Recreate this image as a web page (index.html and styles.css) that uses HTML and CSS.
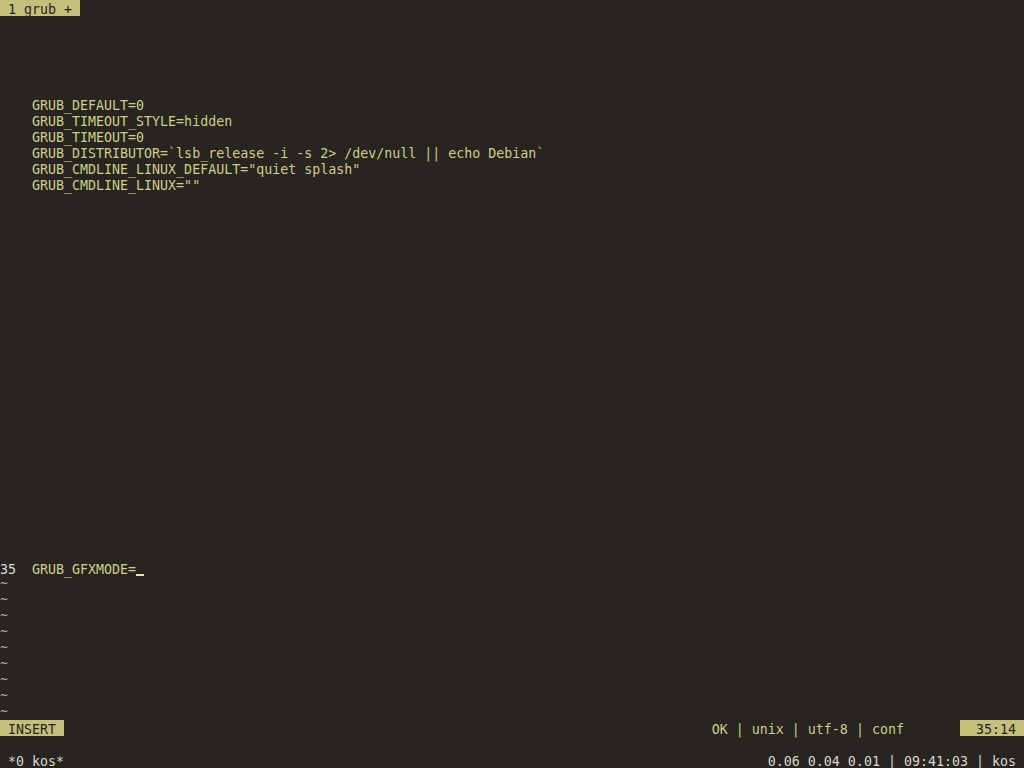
FILE: index.html
```html
<!DOCTYPE html>
<html lang="en">
<head>
    <meta charset="UTF-8">
    <link rel="stylesheet" href="styles.css">
</head>
<body>
    <div class="screen">
        <div class="row tabbar"><span class="tab"> 1 grub + </span></div>

        <div class="editor">
            <div class="blank-top"></div>
            <div class="row">    GRUB_DEFAULT=0</div>
            <div class="row">    GRUB_TIMEOUT_STYLE=hidden</div>
            <div class="row">    GRUB_TIMEOUT=0</div>
            <div class="row">    GRUB_DISTRIBUTOR=`lsb_release -i -s 2&gt; /dev/null || echo Debian`</div>
            <div class="row">    GRUB_CMDLINE_LINUX_DEFAULT="quiet splash"</div>
            <div class="row">    GRUB_CMDLINE_LINUX=""</div>
            <div class="blank-mid"></div>
            <div class="row"><span class="lnum">35  </span>GRUB_GFXMODE=<span class="cursor"> </span></div>
            <div class="row tilde">~</div>
            <div class="row tilde">~</div>
            <div class="row tilde">~</div>
            <div class="row tilde">~</div>
            <div class="row tilde">~</div>
            <div class="row tilde">~</div>
            <div class="row tilde">~</div>
            <div class="row tilde">~</div>
            <div class="row tilde">~</div>
        </div>

        <div class="row statusline">
            <span class="mode"> INSERT </span>
            <span class="status-right">OK | unix | utf-8 | conf       <span class="pos">  35:14 </span></span>
        </div>
        <div class="row"></div>
        <div class="row tmux">
            <span> *0 kos*</span>
            <span>0.06 0.04 0.01 | 09:41:03 | kos </span>
        </div>
    </div>
</body>
</html>
```

FILE: styles.css
```css
html, body {
    margin: 0;
    padding: 0;
    background-color: #28241f;
}
.screen {
    width: 1024px;
    height: 768px;
    overflow: hidden;
    font-family: "DejaVu Sans Mono", "Liberation Mono", monospace;
    font-size: 13.3px;
    color: #cfcc8a;
}
.row {
    height: 16px;
    line-height: 19px; /* glyphs sit a little low in the cell */
    white-space: pre;
}
.tab, .mode, .pos {
    display: inline-block;
    height: 16px;
    vertical-align: top;
    background-color: #c2c07a;
    color: #28241f;
}
.blank-top {
    height: 80px; /* 5 empty rows */
}
.blank-mid {
    height: 368px; /* 23 empty rows */
}
.lnum {
    color: #dedbcf;
}
.cursor {
    display: inline-block;
    width: 8px;
    height: 16px;
    vertical-align: top;
    box-sizing: border-box;
    border-bottom: 2px solid #e6e3c8;
}
.tilde {
    color: #a8a49a;
    line-height: 16px;
}
.statusline {
    display: flex;
    justify-content: space-between;
}
.tmux {
    display: flex;
    justify-content: space-between;
    color: #d8d6cc;
}
```
